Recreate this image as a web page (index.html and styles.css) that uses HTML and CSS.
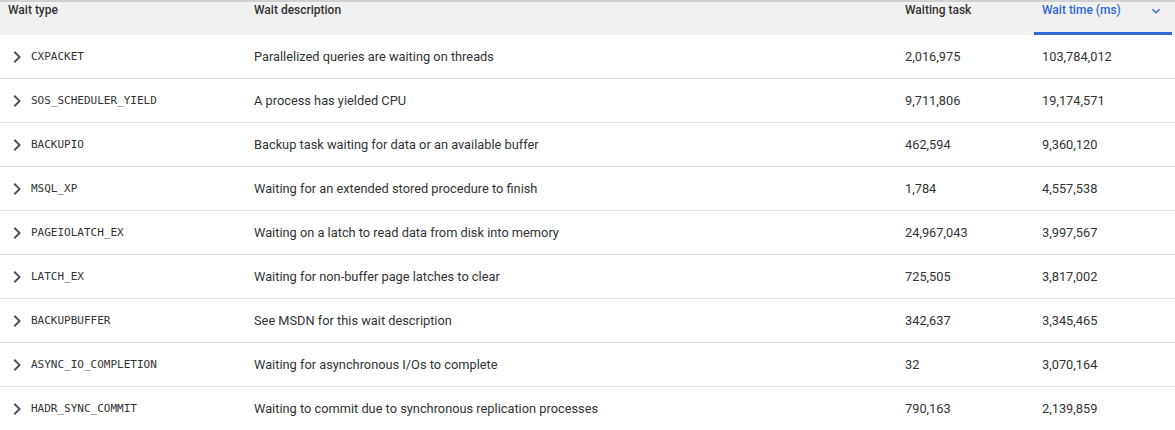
FILE: index.html
```html
<!DOCTYPE html>
<html>
<head>
<meta charset="utf-8">
<link rel="stylesheet" href="styles.css">
</head>
<body>
<div class="table">
  <div class="head">
    <div class="hcell">Wait type</div>
    <div class="hcell">Wait description</div>
    <div class="hcell">Waiting task</div>
    <div class="hcell sorted"><span>Wait time (ms)</span><svg class="sort-icon" viewBox="0 0 24 24" width="16" height="16"><path d="M7.41 8.59 12 13.17l4.59-4.58L18 10l-6 6-6-6z" fill="currentColor"/></svg></div>
  </div>
  <div class="row">
    <div class="cell type"><svg class="chev" viewBox="0 0 24 24" width="24" height="24"><path d="M8.59 16.59 13.17 12 8.59 7.41 10 6l6 6-6 6z" fill="currentColor"/></svg><span class="mono">CXPACKET</span></div>
    <div class="cell">Parallelized queries are waiting on threads</div>
    <div class="cell">2,016,975</div>
    <div class="cell">103,784,012</div>
  </div>
  <div class="row">
    <div class="cell type"><svg class="chev" viewBox="0 0 24 24" width="24" height="24"><path d="M8.59 16.59 13.17 12 8.59 7.41 10 6l6 6-6 6z" fill="currentColor"/></svg><span class="mono">SOS_SCHEDULER_YIELD</span></div>
    <div class="cell">A process has yielded CPU</div>
    <div class="cell">9,711,806</div>
    <div class="cell">19,174,571</div>
  </div>
  <div class="row">
    <div class="cell type"><svg class="chev" viewBox="0 0 24 24" width="24" height="24"><path d="M8.59 16.59 13.17 12 8.59 7.41 10 6l6 6-6 6z" fill="currentColor"/></svg><span class="mono">BACKUPIO</span></div>
    <div class="cell">Backup task waiting for data or an available buffer</div>
    <div class="cell">462,594</div>
    <div class="cell">9,360,120</div>
  </div>
  <div class="row">
    <div class="cell type"><svg class="chev" viewBox="0 0 24 24" width="24" height="24"><path d="M8.59 16.59 13.17 12 8.59 7.41 10 6l6 6-6 6z" fill="currentColor"/></svg><span class="mono">MSQL_XP</span></div>
    <div class="cell">Waiting for an extended stored procedure to finish</div>
    <div class="cell">1,784</div>
    <div class="cell">4,557,538</div>
  </div>
  <div class="row">
    <div class="cell type"><svg class="chev" viewBox="0 0 24 24" width="24" height="24"><path d="M8.59 16.59 13.17 12 8.59 7.41 10 6l6 6-6 6z" fill="currentColor"/></svg><span class="mono">PAGEIOLATCH_EX</span></div>
    <div class="cell">Waiting on a latch to read data from disk into memory</div>
    <div class="cell">24,967,043</div>
    <div class="cell">3,997,567</div>
  </div>
  <div class="row">
    <div class="cell type"><svg class="chev" viewBox="0 0 24 24" width="24" height="24"><path d="M8.59 16.59 13.17 12 8.59 7.41 10 6l6 6-6 6z" fill="currentColor"/></svg><span class="mono">LATCH_EX</span></div>
    <div class="cell">Waiting for non-buffer page latches to clear</div>
    <div class="cell">725,505</div>
    <div class="cell">3,817,002</div>
  </div>
  <div class="row">
    <div class="cell type"><svg class="chev" viewBox="0 0 24 24" width="24" height="24"><path d="M8.59 16.59 13.17 12 8.59 7.41 10 6l6 6-6 6z" fill="currentColor"/></svg><span class="mono">BACKUPBUFFER</span></div>
    <div class="cell">See MSDN for this wait description</div>
    <div class="cell">342,637</div>
    <div class="cell">3,345,465</div>
  </div>
  <div class="row">
    <div class="cell type"><svg class="chev" viewBox="0 0 24 24" width="24" height="24"><path d="M8.59 16.59 13.17 12 8.59 7.41 10 6l6 6-6 6z" fill="currentColor"/></svg><span class="mono">ASYNC_IO_COMPLETION</span></div>
    <div class="cell">Waiting for asynchronous I/Os to complete</div>
    <div class="cell">32</div>
    <div class="cell">3,070,164</div>
  </div>
  <div class="row">
    <div class="cell type"><svg class="chev" viewBox="0 0 24 24" width="24" height="24"><path d="M8.59 16.59 13.17 12 8.59 7.41 10 6l6 6-6 6z" fill="currentColor"/></svg><span class="mono">HADR_SYNC_COMMIT</span></div>
    <div class="cell">Waiting to commit due to synchronous replication processes</div>
    <div class="cell">790,163</div>
    <div class="cell">2,139,859</div>
  </div>
</div>
</body>
</html>
```

FILE: styles.css
```css
* { box-sizing: border-box; }
html, body { margin: 0; padding: 0; background: #fff; }
body {
  font-family: Roboto, "Liberation Sans", Arial, sans-serif;
  color: #333;
  width: 1175px;
  overflow: hidden;
}
.table { width: 1175px; }
.head, .row {
  display: grid;
  grid-template-columns: 246px 651px 137px 141px;
}
.head {
  background: #f1f1f1;
  border-top: 2px solid #d0d0d0;
  height: 35px;
}
.hcell {
  font-size: 12px;
  font-weight: 500;
  color: #333;
  padding: 1px 8px 0;
  line-height: 14px;
}
.hcell.sorted {
  color: #3367d6;
  display: flex;
  justify-content: space-between;
  align-items: flex-start;
  margin-right: 3px;
  border-bottom: 3px solid #3367d6;
  padding-right: 8px;
}
.sort-icon { color: #3367d6; flex: none; }
.row {
  height: 44px;
  border-bottom: 1px solid #e0e0e0;
  align-items: center;
}
.row:last-child { border-bottom: none; }
.cell {
  font-size: 12.8px;
  padding: 0 8px;
  line-height: 16px;
}
.cell.type {
  display: flex;
  align-items: center;
  padding-left: 5px;
}
.chev { color: #555; flex: none; margin-right: 2px; }
.mono {
  font-family: "DejaVu Sans Mono", "Liberation Mono", monospace;
  font-size: 11px;
  color: #333;
}
```
